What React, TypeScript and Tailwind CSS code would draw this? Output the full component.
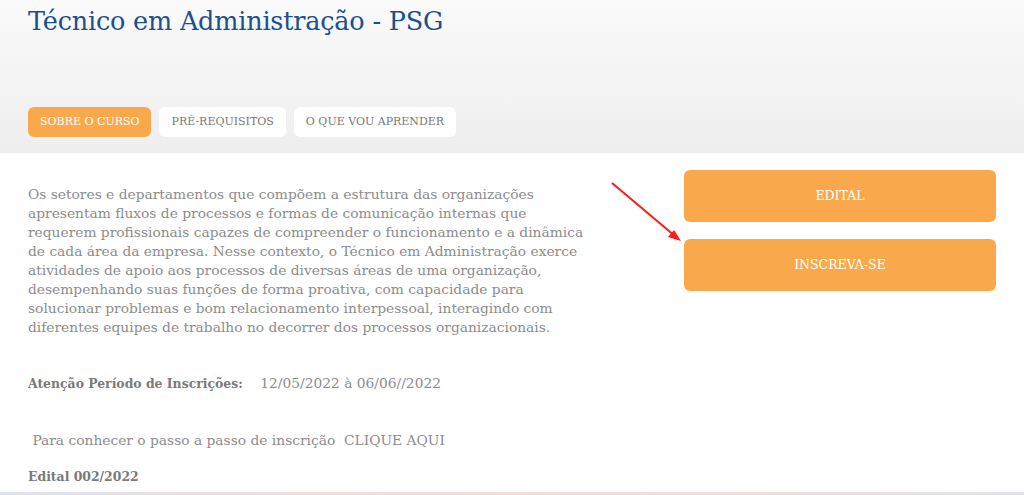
import React from "react";

const font = { fontFamily: '"DejaVu Serif", "Liberation Serif", serif' };

const lines = [
  "Os setores e departamentos que compõem a estrutura das organizações",
  "apresentam fluxos de processos e formas de comunicação internas que",
  "requerem profissionais capazes de compreender o funcionamento e a dinâmica",
  "de cada área da empresa. Nesse contexto, o Técnico em Administração exerce",
  "atividades de apoio aos processos de diversas áreas de uma organização,",
  "desempenhando suas funções de forma proativa, com capacidade para",
  "solucionar problemas e bom relacionamento interpessoal, interagindo com",
  "diferentes equipes de trabalho no decorrer dos processos organizacionais.",
];

const Tab = ({ label, active }: { label: string; active?: boolean }) => (
  <button
    className={`h-[30px] px-3 rounded-md text-[11px] uppercase ${
      active ? "bg-[#f9a94b] text-white" : "bg-white text-[#777]"
    }`}
  >
    {label}
  </button>
);

const ActionButton = ({ label }: { label: string }) => (
  <button className="w-full h-[52px] rounded-md bg-[#f9a94b] text-white text-[12.5px] uppercase">
    {label}
  </button>
);

export default function App() {
  return (
    <div className="w-[1024px] h-[495px] overflow-hidden bg-white flex flex-col" style={font}>
      <div className="shrink-0 h-[153px] bg-gradient-to-b from-[#fafafa] to-[#eeeeee] px-7 pt-[4px] flex flex-col">
        <h1 className="text-[25.5px] text-[#1b4f8f] leading-[34px] tracking-[-0.2px]">
          Técnico em Administração - PSG
        </h1>
        <div className="mt-auto mb-[16px] flex gap-2">
          <Tab label="Sobre o curso" active />
          <Tab label="Pré-requisitos" />
          <Tab label="O que vou aprender" />
        </div>
      </div>

      <div className="flex-1 min-h-0 flex px-7 relative">
        <div className="pt-[32px] text-[#8c8c8c] text-[13.8px] leading-[19px]">
          <p className="whitespace-nowrap">
            {lines.map((l, i) => (
              <React.Fragment key={i}>
                {l}
                {i < lines.length - 1 && <br />}
              </React.Fragment>
            ))}
          </p>
          <p className="mt-[37px]">
            <span className="font-bold text-[#7a7a7a] [font-stretch:condensed]">
              Atenção Período de Inscrições:
            </span>
            &nbsp;&nbsp;&nbsp; 12/05/2022 à 06/06//2022
          </p>
          <p className="mt-[38px]">&nbsp;Para conhecer o passo a passo de inscrição&nbsp; CLIQUE AQUI</p>
          <p className="mt-[17px] font-bold text-[#7a7a7a] [font-stretch:condensed]">Edital 002/2022</p>
        </div>
        <div className="ml-auto shrink-0 w-[312px] mt-[17px] flex flex-col gap-[17px]">
          <ActionButton label="Edital" />
          <ActionButton label="Inscreva-se" />
        </div>
        <svg
          className="absolute left-[605px] top-[24px]"
          width="80"
          height="70"
          viewBox="0 0 80 70"
        >
          <line x1="7" y1="6" x2="70" y2="59" stroke="#ff1a1a" strokeWidth="2" />
          <polygon points="76,64 63,60 69,53" fill="#ff1a1a" />
        </svg>
      </div>
      <div className="shrink-0 h-[3px] bg-gradient-to-r from-[#dfe3ea] via-[#f3dcd8] to-[#e2e4e8]" />
    </div>
  );
}
